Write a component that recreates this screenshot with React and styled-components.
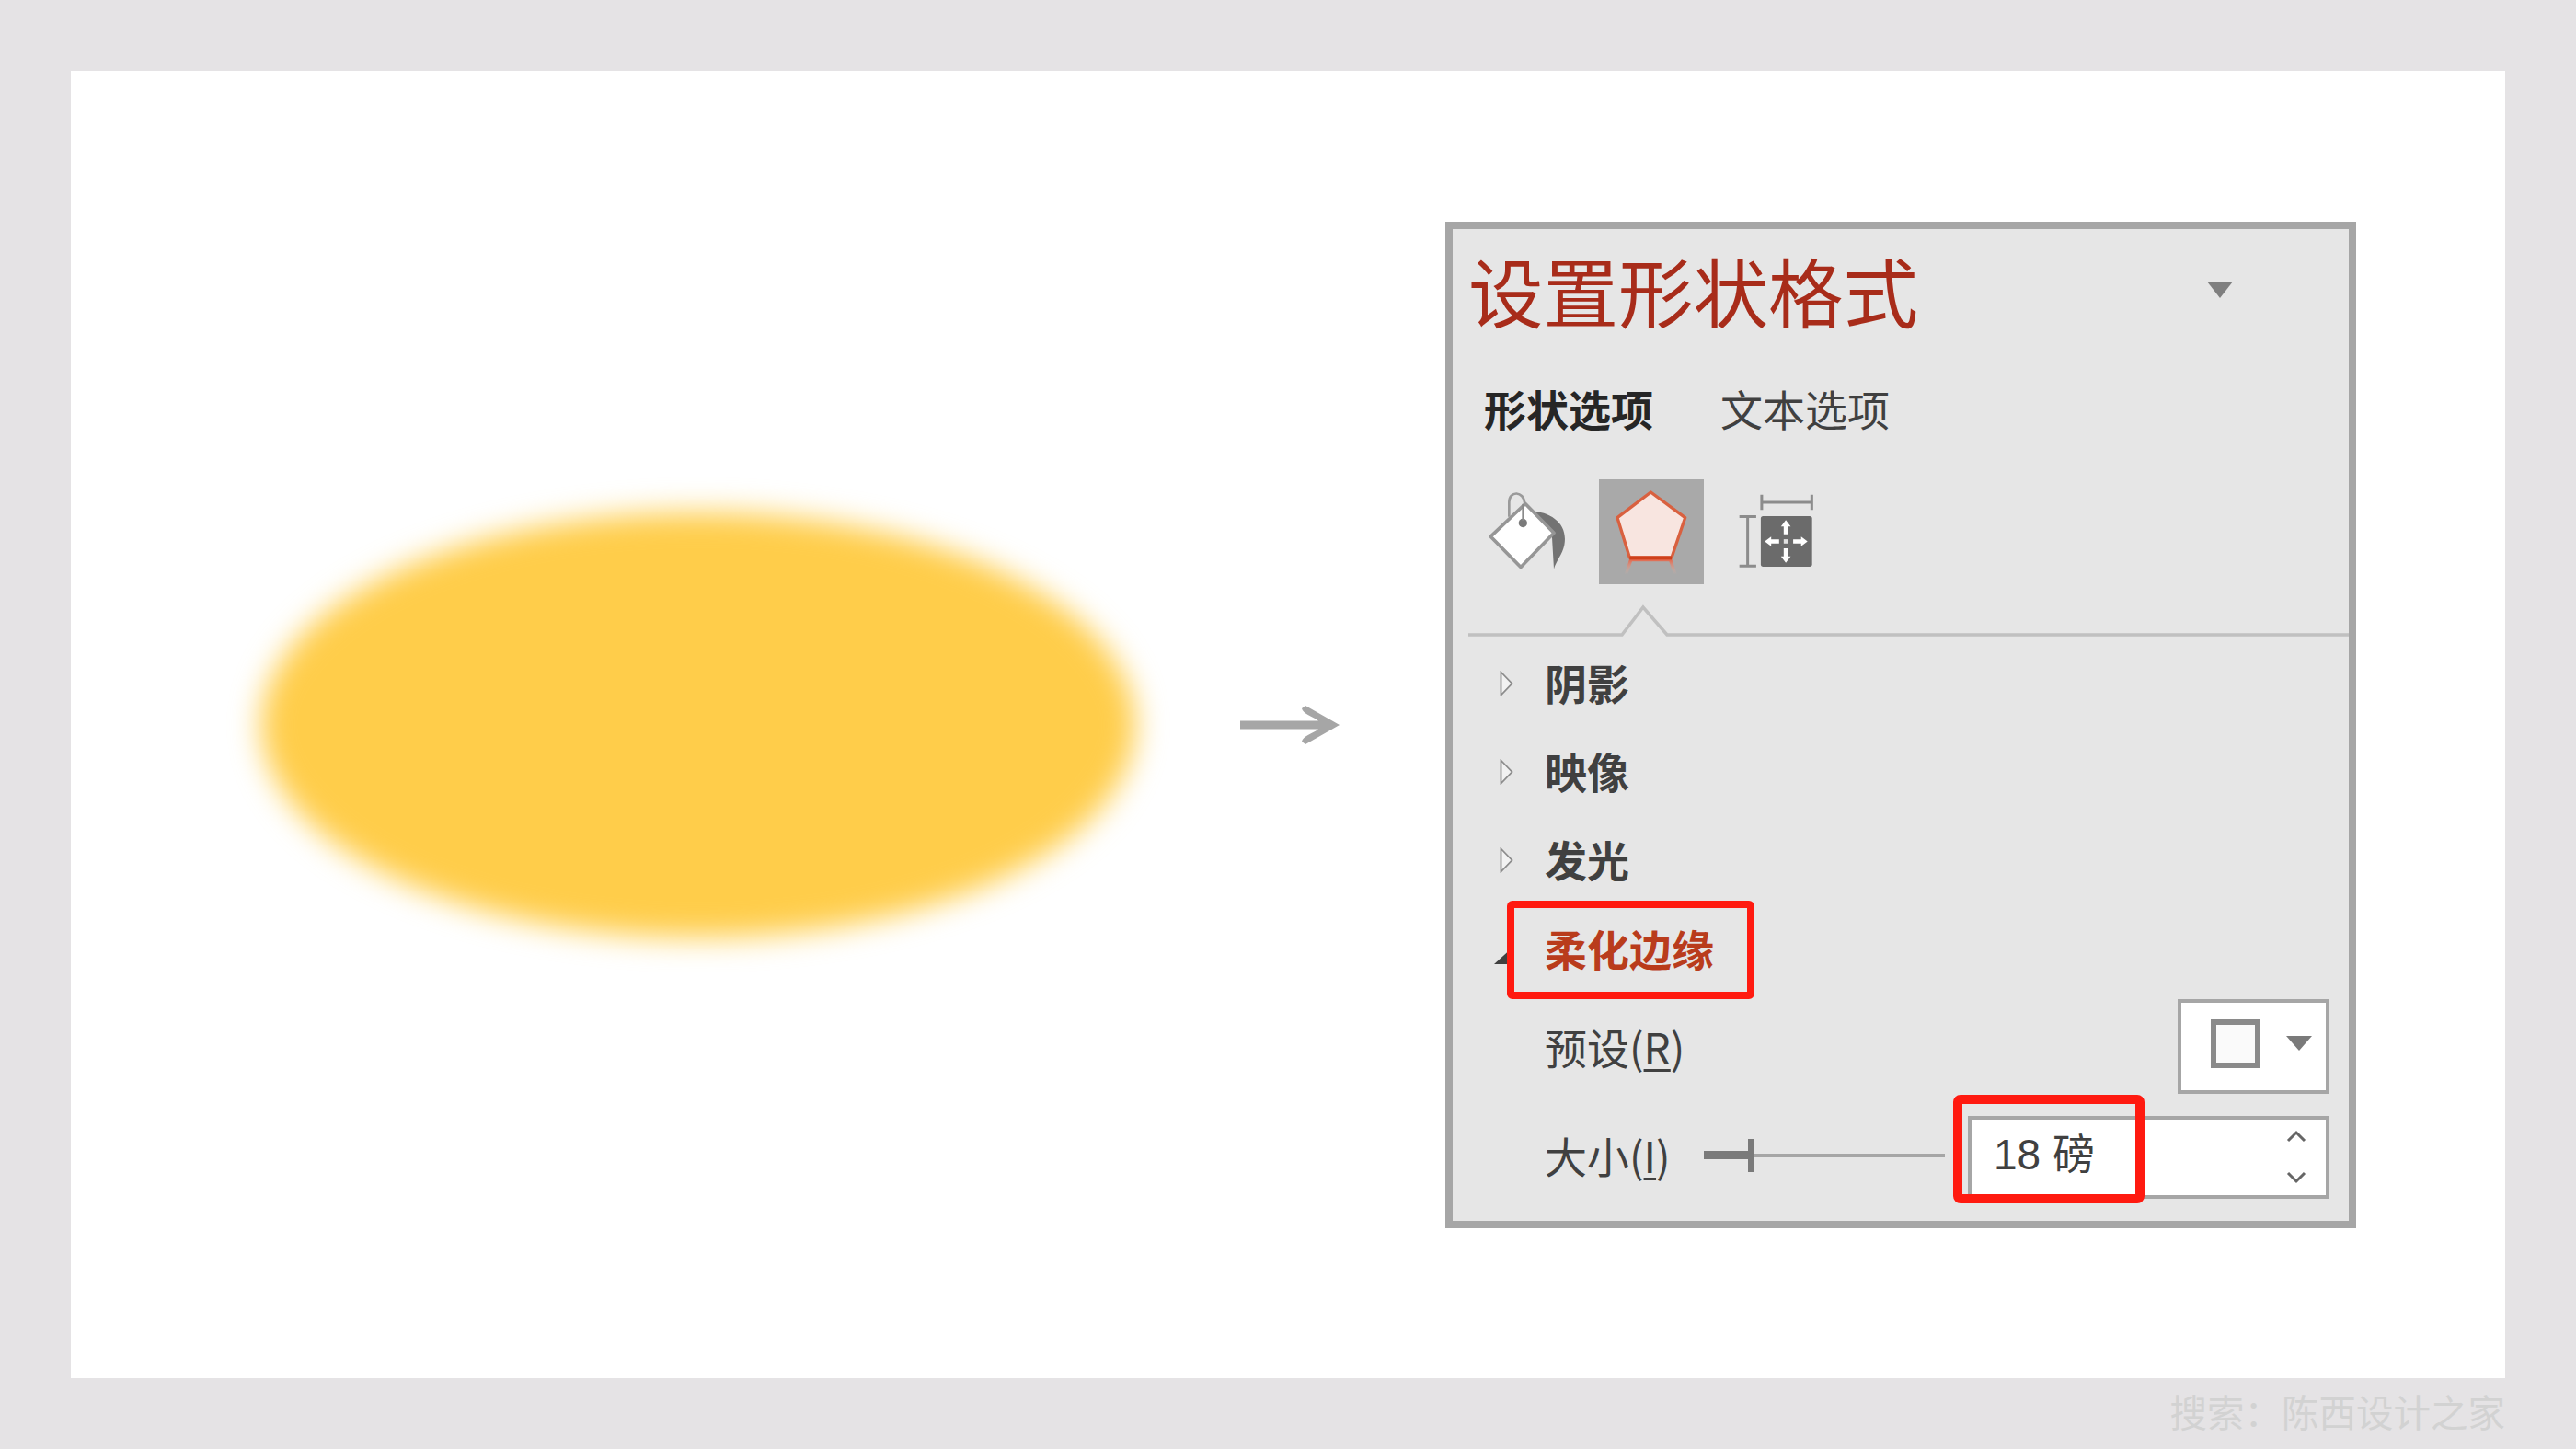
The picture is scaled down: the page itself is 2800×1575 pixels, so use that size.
import React from "react";
import styled, { createGlobalStyle } from "styled-components";

const GlobalStyle = createGlobalStyle`
  html, body {
    margin: 0;
    padding: 0;
    background: #e5e3e5;
  }
  body {
    font-family: "Noto Sans CJK SC", "Liberation Sans", sans-serif;
  }
`;

const App = () => {
  return (
    <Page>
      <GlobalStyle />
      <Slide>
        <SoftEllipse />
        <ArrowIcon />
        <Panel>
          <TitleRow>
            <Title>设置形状格式</Title>
            <Caret $w={29} $h={18} $color="#7f7f7f" />
          </TitleRow>
          <Tabs>
            <Tab $active>形状选项</Tab>
            <Tab>文本选项</Tab>
          </Tabs>
          <IconRow>
            <IconCell>
              <BucketIcon />
            </IconCell>
            <IconCell $active>
              <PentagonIcon />
            </IconCell>
            <IconCell>
              <SizeIcon />
            </IconCell>
          </IconRow>
          <TabLine />
          <Sections>
            <Section>
              <Expander viewBox="0 0 15 28">
                <path d="M1.5 1.5 L13.5 14 L1.5 26.5 Z" fill="#f2f2f2" stroke="#8c8c8c" strokeWidth="1.8" />
              </Expander>
              <SectionLabel>阴影</SectionLabel>
            </Section>
            <Section>
              <Expander viewBox="0 0 15 28">
                <path d="M1.5 1.5 L13.5 14 L1.5 26.5 Z" fill="#f2f2f2" stroke="#8c8c8c" strokeWidth="1.8" />
              </Expander>
              <SectionLabel>映像</SectionLabel>
            </Section>
            <Section>
              <Expander viewBox="0 0 15 28">
                <path d="M1.5 1.5 L13.5 14 L1.5 26.5 Z" fill="#f2f2f2" stroke="#8c8c8c" strokeWidth="1.8" />
              </Expander>
              <SectionLabel>发光</SectionLabel>
            </Section>
            <OpenSection>
              <OpenMark />
              <SectionLabel $open>柔化边缘</SectionLabel>
              <Highlight />
            </OpenSection>
            <PresetRow>
              <FieldLabel>
                预设(<u>R</u>)
              </FieldLabel>
              <PresetButton>
                <PresetSwatch />
                <Caret $w={28} $h={16} $color="#7a7a7a" />
              </PresetButton>
            </PresetRow>
            <SizeRow>
              <FieldLabel $lift={6}>
                大小(<u>I</u>)
              </FieldLabel>
              <Slider>
                <SliderFill />
                <SliderThumb />
              </Slider>
              <SpinBox>
                <SpinValue>18 磅</SpinValue>
                <SpinArrows>
                  <Chevron viewBox="0 0 22 14">
                    <path d="M2 12 L11 3 L20 12" />
                  </Chevron>
                  <Chevron viewBox="0 0 22 14">
                    <path d="M2 2 L11 11 L20 2" />
                  </Chevron>
                </SpinArrows>
                <ValueHighlight />
              </SpinBox>
            </SizeRow>
          </Sections>
        </Panel>
      </Slide>
      <Watermark>搜索：陈西设计之家</Watermark>
    </Page>
  );
};

export default App;

const ArrowIcon = () => (
  <ArrowSvg viewBox="0 0 108 42">
    <path
      d="M0 16.5 H85 C78 11 68 9 67 3 L71 0 L108 21 L71 42 L67 39 C68 33 78 31 85 25.5 H0 Z"
      fill="#a6a6a6"
    />
  </ArrowSvg>
);

const BucketIcon = () => (
  <svg width="85" height="87" viewBox="85 65 255 260">
    <path d="M152 148 V100 C152 62 200 62 203 104" fill="none" stroke="#9a9a9a" strokeWidth="8" />
    <path d="M222 128 C290 132 345 170 332 240 C326 270 306 290 298 318 L292 215 Z" fill="#737373" />
    <path d="M92 212 L205 105 L298 200 L190 312 Z" fill="#ffffff" stroke="#969696" strokeWidth="11" strokeLinejoin="round" />
    <circle cx="197" cy="168" r="14" fill="#7a7a7a" />
    <path d="M197 106 V160" stroke="#8a8a8a" strokeWidth="6" />
  </svg>
);

const PentagonIcon = () => (
  <svg width="114" height="114" viewBox="445 30 342 342">
    <defs>
      <linearGradient id="reflection" x1="0" y1="0" x2="0" y2="1">
        <stop offset="0" stopColor="#e8593a" stopOpacity="1" />
        <stop offset="1" stopColor="#f4b7a5" stopOpacity="0" />
      </linearGradient>
    </defs>
    <path d="M545 288 H682 L699 340 H688 L674 298 H553 L539 340 H528 Z" fill="url(#reflection)" />
    <path d="M614 72 L726 155 L682 285 H545 L505 155 Z" fill="#f8e5e0" stroke="#d9603f" strokeWidth="10" strokeLinejoin="round" />
    <path d="M545 286 H682" stroke="#cf3f1a" strokeWidth="11" />
  </svg>
);

const SizeIcon = () => (
  <svg width="83" height="83" viewBox="895 75 250 250">
    <g stroke="#8c8c8c" strokeWidth="9" fill="none">
      <path d="M900 152 H955 M927 152 V314 M900 314 H955" />
      <path d="M973 80 V130 M973 105 H1137 M1137 80 V130" />
    </g>
    <rect x="970" y="150" width="168" height="166" rx="8" fill="#6b6b6b" />
    <g fill="#ffffff">
      <path d="M1052 163 L1068 184 H1059 V210 H1045 V184 H1036 Z" />
      <path d="M1052 303 L1068 282 H1059 V256 H1045 V282 H1036 Z" />
      <path d="M983 233 L1004 217 V226 H1030 V240 H1004 V249 Z" />
      <path d="M1123 233 L1102 217 V226 H1076 V240 H1102 V249 Z" />
      <rect x="1045" y="226" width="14" height="14" opacity="0.8" />
    </g>
  </svg>
);

const TabLine = () => (
  <TabLineSvg viewBox="0 0 957 37">
    <path d="M0 33 H167 L190 3 L216 33 H957" fill="none" stroke="#c0c0c0" strokeWidth="3.5" />
  </TabLineSvg>
);

const Page = styled.div`
  width: 2800px;
  height: 1575px;
  box-sizing: border-box;
  padding: 77px 77px 0;
  background: #e5e3e5;
  overflow: hidden;
`;

const Slide = styled.main`
  height: 1421px;
  background: #ffffff;
  display: flex;
  align-items: center;
  padding-left: 207px;
`;

const SoftEllipse = styled.div`
  width: 950px;
  height: 462px;
  border-radius: 50%;
  background: #ffcd4a;
  filter: blur(16px);
  flex: none;
`;

const ArrowSvg = styled.svg`
  width: 108px;
  height: 42px;
  margin-left: 114px;
  flex: none;
`;

const Panel = styled.section`
  width: 990px;
  height: 1094px;
  box-sizing: border-box;
  margin-left: 115px;
  border: 8px solid #a6a6a6;
  background: #e6e6e6;
  display: flex;
  flex-direction: column;
  flex: none;
`;

const TitleRow = styled.header`
  height: 146px;
  box-sizing: border-box;
  display: flex;
  align-items: center;
  justify-content: space-between;
  padding: 0 126px 14px 17px;
`;

const Title = styled.h1`
  margin: 0;
  font-size: 81.5px;
  font-weight: 400;
  line-height: 1;
  color: #a82c1a;
`;

const Caret = styled.span`
  display: block;
  width: 0;
  height: 0;
  flex: none;
  border-left: ${(p) => p.$w / 2}px solid transparent;
  border-right: ${(p) => p.$w / 2}px solid transparent;
  border-top: ${(p) => p.$h}px solid ${(p) => p.$color};
`;

const Tabs = styled.nav`
  height: 106px;
  box-sizing: border-box;
  display: flex;
  align-items: center;
  gap: 73px;
  padding: 0 0 10px 34px;
`;

const Tab = styled.span`
  font-size: 46px;
  line-height: 1;
  font-weight: ${(p) => (p.$active ? 700 : 400)};
  color: ${(p) => (p.$active ? "#262626" : "#404040")};
`;

const IconRow = styled.div`
  margin-top: 20px;
  padding-left: 24px;
  display: flex;
  gap: 21px;
`;

const IconCell = styled.div`
  width: 114px;
  height: 114px;
  display: flex;
  align-items: center;
  justify-content: center;
  background: ${(p) => (p.$active ? "#a9a9a9" : "transparent")};
`;

const TabLineSvg = styled.svg`
  display: block;
  width: 957px;
  height: 37px;
  margin: 22px 0 0 17px;
  flex: none;
`;

const Sections = styled.div`
  margin-top: 1px;
  display: flex;
  flex-direction: column;
`;

const Section = styled.div`
  height: 96.4px;
  display: flex;
  align-items: center;
  padding-left: 51px;
`;

const Expander = styled.svg`
  width: 15px;
  height: 28px;
  margin-right: 34px;
  flex: none;
`;

const SectionLabel = styled.span`
  font-size: 46px;
  line-height: 1;
  font-weight: 700;
  margin-bottom: ${(p) => (p.$open ? 10 : 4)}px;
  color: ${(p) => (p.$open ? "#b93c1c" : "#404040")};
`;

const OpenSection = styled(Section)`
  position: relative;
  height: 102px;
`;

const OpenMark = styled.span`
  width: 0;
  height: 0;
  margin: 8px 34px 0 -6px;
  flex: none;
  border-style: solid;
  border-width: 0 0 19px 21px;
  border-color: transparent transparent #404040 transparent;
`;

const Highlight = styled.div`
  position: absolute;
  left: 59px;
  top: -5px;
  width: 269px;
  height: 107px;
  box-sizing: border-box;
  border: 8px solid #ff1a10;
  border-radius: 6px;
`;

const PresetRow = styled.div`
  height: 103px;
  display: flex;
  align-items: center;
  justify-content: space-between;
  padding: 0 21px 0 100px;
`;

const FieldLabel = styled.span`
  font-size: 46px;
  line-height: 1;
  color: #404040;
  flex: none;
  margin-bottom: ${(p) => p.$lift || 0}px;

  u {
    text-underline-offset: 5px;
    text-decoration-thickness: 3px;
  }
`;

const PresetButton = styled.div`
  width: 165px;
  height: 103px;
  box-sizing: border-box;
  border: 4px solid #a6a6a6;
  background: #ffffff;
  display: flex;
  align-items: center;
  gap: 28px;
  padding: 0 0 6px 32px;
`;

const PresetSwatch = styled.span`
  width: 54px;
  height: 53px;
  box-sizing: border-box;
  border: 6px solid #8a8a8a;
  background: #fafafa;
  flex: none;
`;

const SizeRow = styled.div`
  height: 90px;
  margin-top: 24px;
  display: flex;
  align-items: center;
  padding: 0 21px 0 100px;
`;

const Slider = styled.div`
  position: relative;
  width: 262px;
  height: 4px;
  margin: 0 25px 3px auto;
  background: #a6a6a6;
  flex: none;
`;

const SliderFill = styled.span`
  position: absolute;
  left: 0;
  top: -3px;
  width: 48px;
  height: 9px;
  background: #7a7a7a;
`;

const SliderThumb = styled.span`
  position: absolute;
  left: 48px;
  top: -16px;
  width: 7px;
  height: 36px;
  background: #7a7a7a;
`;

const SpinBox = styled.div`
  position: relative;
  width: 393px;
  height: 90px;
  box-sizing: border-box;
  border: 4px solid #a6a6a6;
  background: #ffffff;
  display: flex;
  align-items: center;
  justify-content: space-between;
  padding: 0 21px 0 24px;
  flex: none;
`;

const SpinValue = styled.span`
  font-family: "Liberation Sans", "Noto Sans CJK SC", sans-serif;
  font-size: 46px;
  line-height: 1;
  color: #404040;
  margin-bottom: 6px;
`;

const SpinArrows = styled.div`
  display: flex;
  flex-direction: column;
  gap: 31px;
`;

const Chevron = styled.svg`
  display: block;
  width: 22px;
  height: 14px;

  path {
    fill: none;
    stroke: #666666;
    stroke-width: 3;
  }
`;

const ValueHighlight = styled.div`
  position: absolute;
  left: -20px;
  top: -27px;
  width: 208px;
  height: 118px;
  box-sizing: border-box;
  border: 10px solid #ff1a10;
  border-radius: 8px;
`;

const Watermark = styled.footer`
  margin-top: 13px;
  font-size: 40.5px;
  line-height: 46px;
  text-align: right;
  color: #d2d2d2;
`;
